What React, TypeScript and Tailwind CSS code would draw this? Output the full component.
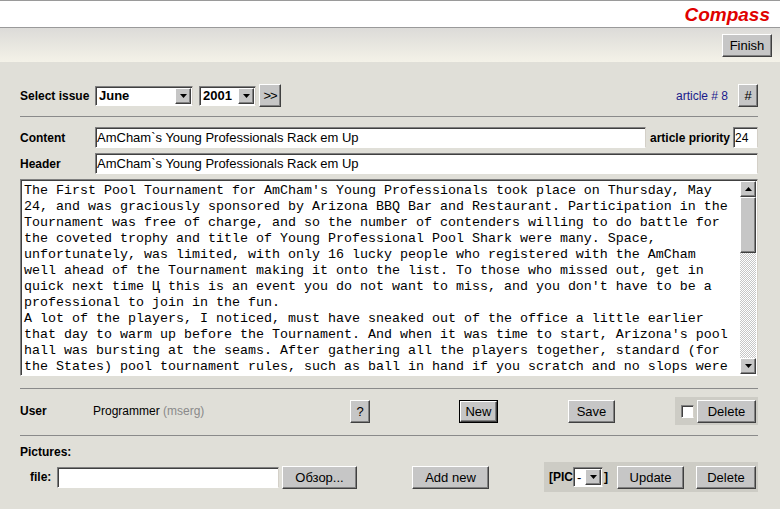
import { type FC, type ReactNode } from "react";

const lines = [
  "The First Pool Tournament for AmCham's Young Professionals took place on Thursday, May",
  "24, and was graciously sponsored by Arizona BBQ Bar and Restaurant. Participation in the",
  "Tournament was free of charge, and so the number of contenders willing to do battle for",
  "the coveted trophy and title of Young Professional Pool Shark were many. Space,",
  "unfortunately, was limited, with only 16 lucky people who registered with the AmCham",
  "well ahead of the Tournament making it onto the list. To those who missed out, get in",
  "quick next time Ц this is an event you do not want to miss, and you don't have to be a",
  "professional to join in the fun.",
  "A lot of the players, I noticed, must have sneaked out of the office a little earlier",
  "that day to warm up before the Tournament. And when it was time to start, Arizona's pool",
  "hall was bursting at the seams. After gathering all the players together, standard (for",
  "the States) pool tournament rules, such as ball in hand if you scratch and no slops were",
];

interface BtnProps {
  className?: string;
  children?: ReactNode;
}

const Btn: FC<BtnProps> = ({ className, children }) => (
  <div
    className={`flex items-center justify-center bg-[#c6c6c6] border border-t-white border-l-white border-r-[#404040] border-b-[#404040] shadow-[inset_-1px_-1px_0_#808080] text-[13px] text-black leading-none ${className}`}
  >
    {children}
  </div>
);

const Arrow: FC<{ down?: boolean }> = ({ down }) => (
  <svg width="7" height="4" viewBox="0 0 7 4" className={down ? "" : "rotate-180"}>
    <path d="M0 0h7L3.5 4z" fill="#000" />
  </svg>
);

const Sunken: FC<BtnProps> = ({ className, children }) => (
  <div
    className={`bg-white border border-t-[#808080] border-l-[#808080] border-b-white border-r-[#d4d0c8] shadow-[inset_1px_1px_0_#404040] flex items-center ${className}`}
  >
    {children}
  </div>
);

const Select: FC<BtnProps> = ({ className, children }) => (
  <Sunken className={`h-[20px] ${className}`}>
    <span className="flex-1 pl-[3px] text-[13px] font-bold leading-none">{children}</span>
    <Btn className="w-[16px] h-[16px] mr-[1px]">
      <Arrow down />
    </Btn>
  </Sunken>
);

const Hr = ({ className }: { className?: string }) => (
  <div className={`border-t border-[#8a8a8a] ${className}`} />
);

export default function App() {
  return (
    <div className="w-[780px] h-[509px] overflow-hidden bg-[#e0dfd8] text-black font-['Liberation_Sans',Arial,sans-serif]">
      <div className="h-[28px] bg-white border-t border-b border-[#9a9a9a] flex items-center justify-end pr-[10px]">
        <span className="text-[#e00000] italic font-bold text-[19px] leading-none">Compass</span>
      </div>
      <div className="h-[34px] bg-gradient-to-b from-[#dcdbd8] to-[#f4f2e8] flex items-start justify-end pr-[8px] pt-[6px]">
        <Btn className="w-[50px] h-[23px]">Finish</Btn>
      </div>

      <div className="pl-[20px] pr-[22px]">
        <div className="mt-[22px] flex items-center h-[23px]">
          <span className="w-[75px] font-bold text-[12px]">Select issue</span>
          <Select className="w-[98px]">June</Select>
          <Select className="w-[57px] ml-[6px]">2001</Select>
          <Btn className="ml-[3px] w-[22px] h-[23px] text-[10px] tracking-[-1px]">&gt;&gt;</Btn>
          <span className="ml-auto text-[#1a1a8c] text-[12px]">article # 8</span>
          <Btn className="ml-[10px] w-[20px] h-[23px] text-[12px]">#</Btn>
        </div>

        <Hr className="mt-[9px]" />

        <div className="mt-[10px] flex items-center h-[21px]">
          <span className="w-[75px] font-bold text-[12px]">Content</span>
          <Sunken className="w-[551px] h-[21px] pl-[1px] text-[13px]">
            AmCham`s Young Professionals Rack em Up
          </Sunken>
          <span className="ml-[4px] font-bold text-[12px]">article priority</span>
          <Sunken className="ml-auto w-[25px] h-[21px] pl-[1px] text-[12px]">24</Sunken>
        </div>

        <div className="mt-[5px] flex items-center h-[21px]">
          <span className="w-[75px] font-bold text-[12px]">Header</span>
          <Sunken className="flex-1 h-[21px] pl-[1px] text-[13px]">
            AmCham`s Young Professionals Rack em Up
          </Sunken>
        </div>

        <Sunken className="mt-[5px] h-[197px] items-stretch p-px">
          <div className="flex-1 pl-[2px] pt-[2px] overflow-hidden font-['Liberation_Mono','Courier_New',monospace] text-[13.33px] leading-[16px] whitespace-pre">
            {lines.map((l, i) => (
              <div key={i}>{l}</div>
            ))}
          </div>
          <div className="w-[16px] flex flex-col">
            <Btn className="h-[16px]">
              <Arrow />
            </Btn>
            <Btn className="h-[56px]" />
            <div className="flex-1 bg-[repeating-conic-gradient(#ffffff_0_25%,#c6c6c6_0_50%)] bg-[length:2px_2px]" />
            <Btn className="h-[16px]">
              <Arrow down />
            </Btn>
          </div>
        </Sunken>

        <Hr className="mt-[12px]" />

        <div className="mt-[8px] flex items-center h-[28px]">
          <span className="w-[73px] font-bold text-[12px]">User</span>
          <span className="w-[257px] text-[12px]">
            Programmer <span className="text-[#8a8a8a]">(mserg)</span>
          </span>
          <Btn className="w-[20px] h-[23px] text-[12px]">?</Btn>
          <div className="ml-[89px] border border-black">
            <Btn className="w-[37px] h-[21px]">New</Btn>
          </div>
          <Btn className="ml-[70px] w-[47px] h-[23px]">Save</Btn>
          <div className="ml-[60px] w-[83px] h-[28px] bg-[#cdccc5] flex items-center">
            <Sunken className="ml-[6px] w-[13px] h-[13px]" />
            <Btn className="ml-[3px] w-[59px] h-[23px]">Delete</Btn>
          </div>
        </div>

        <Hr className="mt-[10px]" />

        <div className="mt-[9px] font-bold text-[12px] leading-[14px]">Pictures:</div>

        <div className="mt-[3px] flex items-center h-[30px]">
          <span className="w-[37px] pl-[10px] font-bold text-[12px]">file:</span>
          <Sunken className="w-[222px] h-[21px]" />
          <Btn className="ml-[3px] w-[75px] h-[23px]">Обзор...</Btn>
          <Btn className="ml-[55px] w-[77px] h-[23px]">Add new</Btn>
          <div className="ml-auto w-[214px] h-[30px] bg-[#cdccc5] flex items-center">
            <span className="ml-[5px] font-bold text-[12px]">[PIC</span>
            <Select className="w-[30px]">
              <span className="font-normal">-</span>
            </Select>
            <span className="font-bold text-[12px] ml-px">]</span>
            <Btn className="ml-[9px] w-[67px] h-[23px]">Update</Btn>
            <Btn className="ml-auto mr-[2px] w-[60px] h-[23px]">Delete</Btn>
          </div>
        </div>
      </div>
    </div>
  );
}
